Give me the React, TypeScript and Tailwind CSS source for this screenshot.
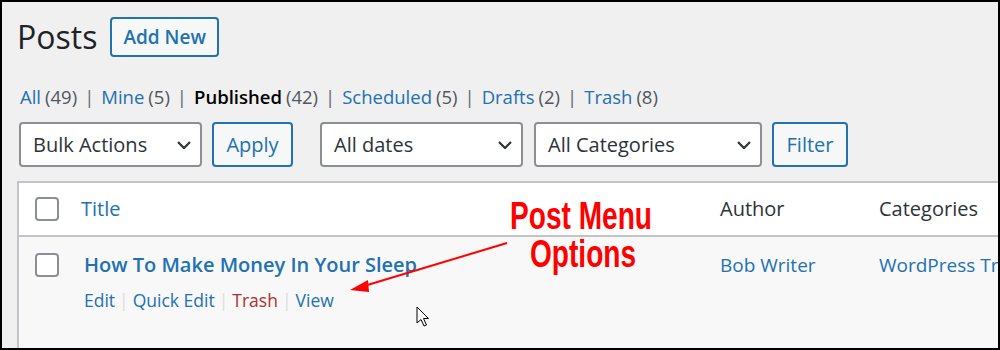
const font = "font-['Open_Sans','Noto_Sans',sans-serif]";
const note =
  "pointer-events-none absolute origin-left scale-x-[0.72] font-['Liberation_Sans',Arial,sans-serif] text-[39px] font-bold leading-[32px] text-[#ff0000]";

function Chevron() {
  return (
    <svg width="14" height="8" viewBox="0 0 14 8" fill="none">
      <path d="M1 1l6 6 6-6" stroke="#2c3338" strokeWidth="2.2" />
    </svg>
  );
}

function Select({ label, width }: { label: string; width: string }) {
  return (
    <div
      className={`flex h-[45px] items-center justify-between rounded-[4px] border-2 border-[#8c8f94] bg-white pl-[12px] pr-[9px] text-[20px] text-[#2c3338] ${width}`}
    >
      <span>{label}</span>
      <Chevron />
    </div>
  );
}

function Button({ label, width }: { label: string; width: string }) {
  return (
    <div
      className={`flex h-[45px] items-center justify-center rounded-[4px] border-2 border-[#2271b1] bg-[#f6f7f7] text-[20px] text-[#2271b1] ${width}`}
    >
      {label}
    </div>
  );
}

function Checkbox() {
  return <div className="h-[24px] w-[24px] rounded-[4px] border-2 border-[#8c8f94] bg-white" />;
}

const views = [
  { label: "All", count: "(49)" },
  { label: "Mine", count: "(5)" },
  { label: "Published", count: "(42)", current: true },
  { label: "Scheduled", count: "(5)" },
  { label: "Drafts", count: "(2)" },
  { label: "Trash", count: "(8)" },
];

export default function App() {
  return (
    <div className={`relative h-[350px] w-[1000px] overflow-hidden bg-[#f0f0f1] ${font}`}>
      {/* heading */}
      <div className="ml-[17px] mt-[17px] flex h-[40px] items-center gap-[13px]">
        <h1 className="text-[32px] leading-[40px] text-[#1d2327]">Posts</h1>
        <div className="flex h-[40px] items-center rounded-[4px] border-2 border-[#2271b1] bg-[#f6f7f7] px-[11px] text-[19px] font-semibold text-[#2271b1]">
          Add New
        </div>
      </div>

      {/* views */}
      <div className="ml-[20px] mt-[26px] flex h-[28px] items-center text-[18.5px] leading-[28px]">
        {views.map((v, i) => (
          <div key={v.label} className="flex items-center">
            {i > 0 ? <span className="mx-[7px] text-[#646970]">|</span> : null}
            <span className={v.current ? "font-semibold text-black" : "text-[#2271b1]"}>{v.label}</span>
            <span className="ml-[4px] text-[#50575e]">{v.count}</span>
          </div>
        ))}
      </div>

      {/* table nav */}
      <div className="ml-[19px] mt-[11px] flex items-center">
        <Select label="Bulk Actions" width="w-[183px]" />
        <Button label="Apply" width="ml-[10px] w-[81px]" />
        <Select label="All dates" width="ml-[27px] w-[203px]" />
        <Select label="All Categories" width="ml-[11px] w-[228px]" />
        <Button label="Filter" width="ml-[10px] w-[76px]" />
      </div>

      {/* table */}
      <div className="ml-[17px] mt-[14px] w-[1000px] border-l-2 border-t-2 border-[#c3c4c7]">
        <div className="grid h-[54px] grid-cols-[62px_639px_159px_1fr] items-center border-b-2 border-[#c3c4c7] bg-white text-[20px]">
          <div className="pl-[16px]">
            <Checkbox />
          </div>
          <div className="text-[#2271b1]">Title</div>
          <div className="text-[#2c3338]">Author</div>
          <div className="text-[#2c3338]">Categories</div>
        </div>
        <div className="grid h-[200px] grid-cols-[62px_639px_159px_1fr] bg-[#f8f8f8] pt-[16px]">
          <div className="pl-[16px]">
            <Checkbox />
          </div>
          <div className="pl-[3px]">
            <div className="text-[20px] font-semibold leading-[24px] text-[#2271b1]">
              How To Make Money In Your Sleep
            </div>
            <div className="mt-[11px] flex items-center text-[17.5px] leading-[24px]">
              <span className="text-[#2271b1]">Edit</span>
              <span className="mx-[4px] text-[#dcdcde]">|</span>
              <span className="text-[#2271b1]">Quick Edit</span>
              <span className="mx-[4px] text-[#dcdcde]">|</span>
              <span className="text-[#b32d2e]">Trash</span>
              <span className="mx-[4px] text-[#dcdcde]">|</span>
              <span className="text-[#2271b1]">View</span>
            </div>
          </div>
          <div className="text-[19px] leading-[24px] text-[#2271b1]">Bob Writer</div>
          <div className="whitespace-nowrap text-[19px] leading-[24px] text-[#2271b1]">WordPress Training</div>
        </div>
      </div>

      {/* annotation */}
      <div className={`${note} left-[510px] top-[200px]`}>Post Menu</div>
      <div className={`${note} left-[530px] top-[238px]`}>Options</div>
      <svg className="pointer-events-none absolute left-0 top-0" width="1000" height="350">
        <line x1="507" y1="243" x2="364" y2="286" stroke="#ff0000" strokeWidth="2" />
        <polygon points="350,290 368,280 369,292" fill="#ff0000" />
        <path
          d="M417 307 L417 323 L421 319.5 L424 326 L426.5 325 L423.5 318.5 L428.5 318.5 Z"
          fill="#fff"
          stroke="#000"
          strokeWidth="1"
          strokeLinejoin="round"
        />
      </svg>

      {/* screenshot frame */}
      <div className="pointer-events-none absolute inset-0 border-2 border-black" />
    </div>
  );
}
